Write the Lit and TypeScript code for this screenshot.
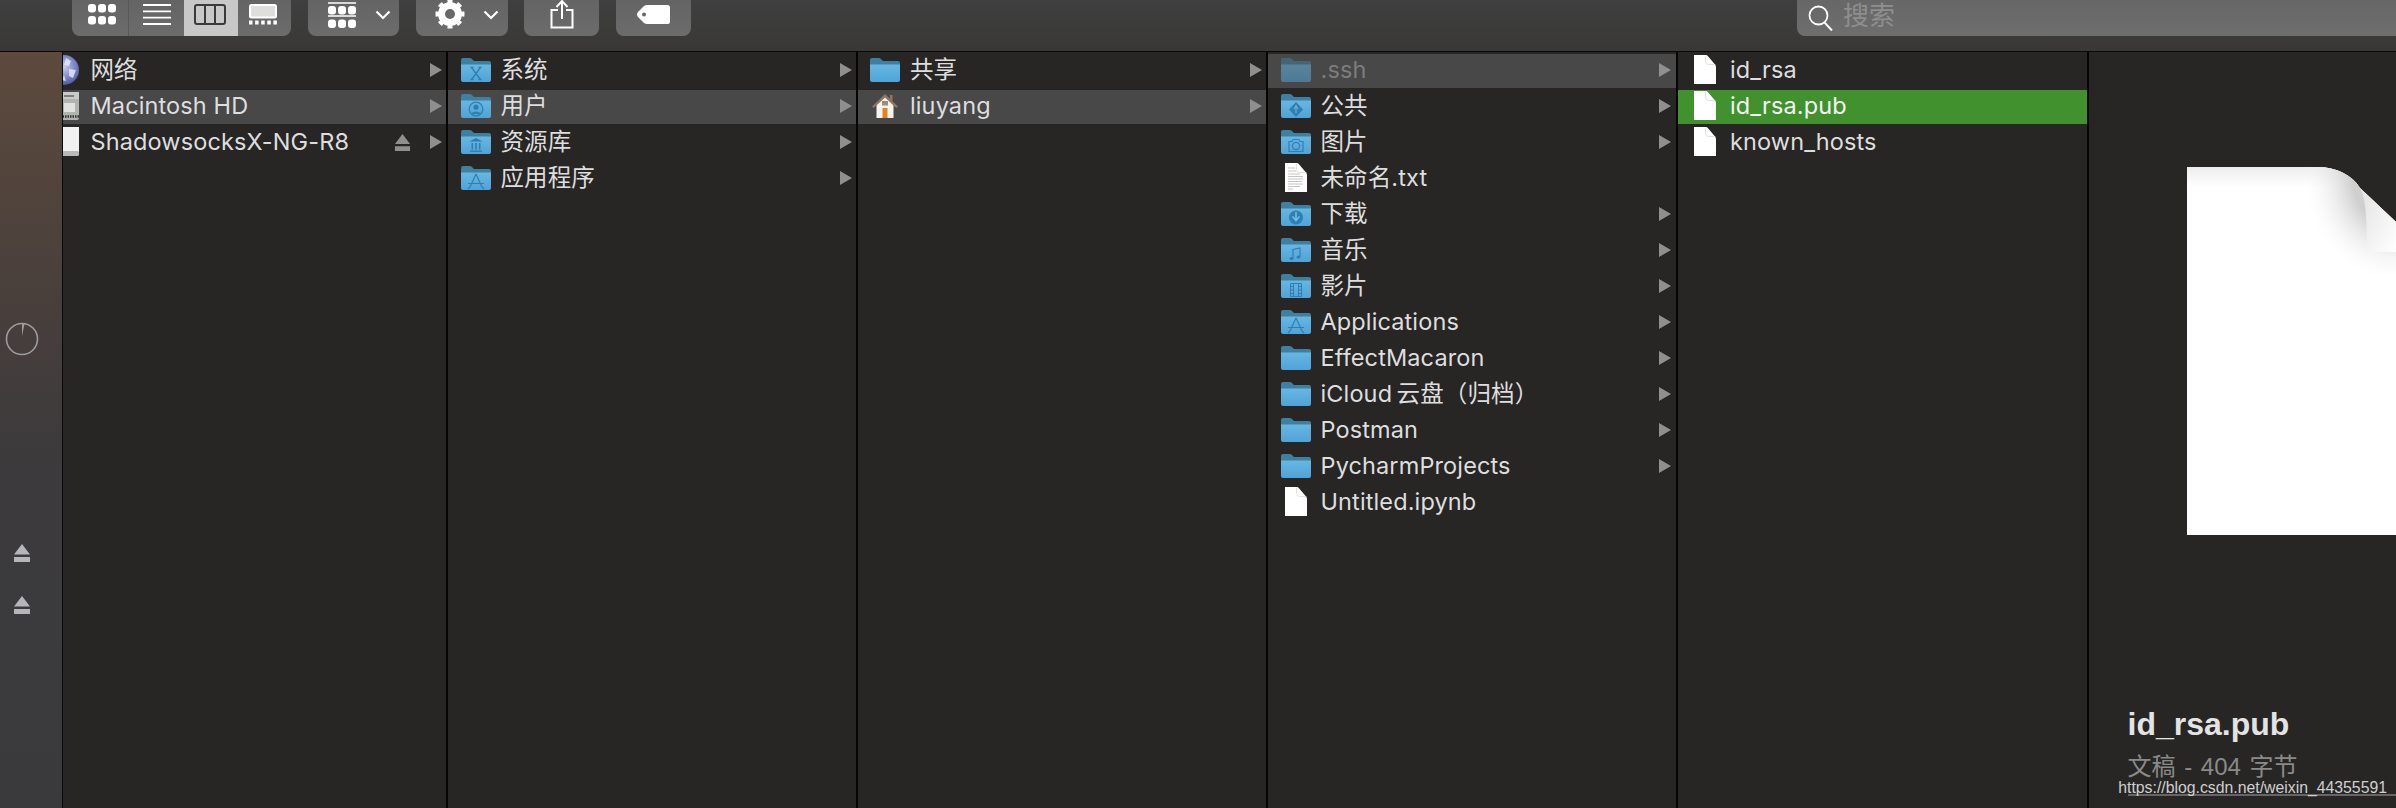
import { LitElement, html, css, svg, nothing } from "lit";
import { customElement } from "lit/decorators.js";

type Row = { n: string; i: string; arrow?: boolean; eject?: boolean; sel?: "grey" | "green"; dim?: boolean };

const blue = "#2f7fb3";
const glyphs: Record<string, unknown> = {
  plain: nothing,
  x: svg`<path d="M10.5 9.5l9 12M19.5 9.5l-9 12M9.5 9.5h3M17.5 9.5h3M9.5 21.5h3M17.5 21.5h3" stroke="${blue}" stroke-width="1.3" fill="none"/>`,
  user: svg`<circle cx="15" cy="15" r="6.8" stroke="${blue}" stroke-width="1.3" fill="none"/><circle cx="15" cy="13.2" r="2.6" fill="${blue}"/><path d="M10.5 20c1-3.2 8-3.2 9 0z" fill="${blue}"/>`,
  bank: svg`<path d="M15 8l7 3.6H8zM9 20.5h12v1.6H9zM10.5 13h1.6v6.5h-1.6zM14.2 13h1.6v6.5h-1.6zM17.9 13h1.6v6.5h-1.6z" fill="${blue}"/>`,
  apps: svg`<path d="M15 8l-6 13M15 8l6 13M7 17.5h16M9 21l-2 2M21 21l2 2" stroke="${blue}" stroke-width="1.2" fill="none"/>`,
  pub: svg`<path d="M15 8l7 7.5-7 7.5-7-7.5z" fill="${blue}"/><path d="M15 11v8M13 15l2-3 2 3" stroke="#6fbde6" stroke-width="1" fill="none"/>`,
  cam: svg`<path d="M8 11.5h3l1.2-2h5.6l1.2 2h3v10H8z" stroke="${blue}" stroke-width="1.2" fill="none"/><circle cx="15" cy="16" r="3.6" stroke="${blue}" stroke-width="1.2" fill="none"/>`,
  down: svg`<circle cx="15" cy="15.5" r="7" fill="${blue}"/><path d="M15 10v8M11.5 14.5l3.5 4 3.5-4" stroke="#6fbde6" stroke-width="1.6" fill="none"/>`,
  music: svg`<path d="M12 20V11.5l7-1.5v8.5" stroke="${blue}" stroke-width="1.2" fill="none"/><ellipse cx="10.5" cy="20.5" rx="2" ry="1.5" fill="${blue}"/><ellipse cx="17.5" cy="19" rx="2" ry="1.5" fill="${blue}"/>`,
  film: svg`<path d="M9.5 9.5h11v13h-11zM12.5 9.5v13M17.5 9.5v13M9.5 12.5h3M9.5 16h3M9.5 19.5h3M17.5 12.5h3M17.5 16h3M17.5 19.5h3" stroke="${blue}" stroke-width="1" fill="none"/>`,
};

const folder = (g: string, dim = false) => html`<svg class="ico ${dim ? "dim" : ""}" viewBox="0 0 30 24" width="30" height="24">
  <defs><linearGradient id="fb" x1="0" y1="0" x2="0" y2="1"><stop offset="0" stop-color="#68b7e2"/><stop offset="1" stop-color="#4fa3d6"/></linearGradient></defs>
  <path d="M0 2q0-2 2-2h7q1.5 0 2.5 1.5L13 3h15q2 0 2 2v4H0z" fill="#3f7f9f"/>
  <path d="M0 6.5h30V22q0 2-2 2H2q-2 0-2-2z" fill="url(#fb)"/>
  ${glyphs[g]}
</svg>`;

const fileIcon = (lines = false) => html`<svg class="ico" viewBox="0 0 30 30" width="30" height="30">
  <path d="M4 0h12q1 0 2 1.2l6.4 7.6q1.600 2 1.600 3V29H4z" fill="#fff"/>
  <path d="M15.500 0.500v6q0 3 3 3h7" fill="none" stroke="#dcdcdc" stroke-width=".8"/>
  ${lines ? svg`<path d="M7 5h7M7 8h8M7 11h12M7 13.500h15M7 16h15M7 18.500h14M7 21h15M7 23.500h12M7 26h5" stroke="#c4c4c4" stroke-width="1" fill="none"/>` : nothing}
</svg>`;

const home = html`<svg class="ico" viewBox="0 0 30 24" width="30" height="24">
  <path d="M6.500 10v14h17V10L15 3z" fill="#f6f4f0"/>
  <path d="M2 12.500L15 0l13 12.500-1.800 1.500L15 3.600 3.800 14z" fill="#8f7560"/>
  <path d="M20 1h2.500v6L20 5z" fill="#8f7560"/>
  <path d="M12.500 14h5v10h-5z" fill="#e8811c"/><rect x="12" y="7" width="6" height="4.500" fill="#a08a76"/>
</svg>`;

const globe = html`<svg class="ico" viewBox="0 0 30 30" width="30" height="30">
  <defs><radialGradient id="gl" cx=".5" cy=".4" r=".6"><stop offset="0" stop-color="#c5cdf0"/><stop offset="1" stop-color="#4e59a6"/></radialGradient></defs>
  <circle cx="15" cy="15" r="15" fill="url(#gl)"/>
  <path d="M17 3l5 3-2 5-5-1zM20 14l7 1-3 8-4-2zM15 20l2 6-4-1z" fill="#e8ecfa" opacity=".8"/>
</svg>`;

const hd = html`<svg class="ico" viewBox="0 0 30 30" width="30" height="30">
  <rect x="1" y="1" width="29" height="28" rx="2" fill="#aeb4ae"/>
  <rect x="1" y="1" width="29" height="7" fill="#c8cbc6"/>
  <rect x="15" y="4" width="10" height="2" fill="#7c807c"/>
  <rect x="15" y="12" width="11" height="9" fill="#dfe2de"/>
  <path d="M1 25.500h29" stroke="#333" stroke-width="2.500" stroke-dasharray="1.500 1"/>
</svg>`;

const usb = html`<svg class="ico" viewBox="0 0 30 30" width="30" height="30">
  <rect x="1" y="0" width="29" height="25" fill="#f1f1f1"/>
  <rect x="1" y="24" width="29" height="5" rx="1.500" fill="#b9b9b9"/>
</svg>`;

const icon = (r: Row) => {
  if (r.i === "file") return fileIcon();
  if (r.i === "txt") return fileIcon(true);
  if (r.i === "home") return home;
  if (r.i === "globe") return globe;
  if (r.i === "hd") return hd;
  if (r.i === "usb") return usb;
  return folder(r.i, r.dim);
};

const eject = (w: number, h: number, c: string) => html`<svg class="eject" viewBox="0 0 16 18" width="${w}" height="${h}">
  <path d="M8 0l8 10.500H0zM0 13h16v5H0z" fill="${c}"/>
</svg>`;

const columns: { cls: string; rows: Row[] }[] = [
  {
    cls: "c1",
    rows: [
      { n: "网络", i: "globe", arrow: true },
      { n: "Macintosh HD", i: "hd", arrow: true, sel: "grey" },
      { n: "ShadowsocksX-NG-R8", i: "usb", arrow: true, eject: true },
    ],
  },
  {
    cls: "c2",
    rows: [
      { n: "系统", i: "x", arrow: true },
      { n: "用户", i: "user", arrow: true, sel: "grey" },
      { n: "资源库", i: "bank", arrow: true },
      { n: "应用程序", i: "apps", arrow: true },
    ],
  },
  {
    cls: "c3",
    rows: [
      { n: "共享", i: "plain", arrow: true },
      { n: "liuyang", i: "home", arrow: true, sel: "grey" },
    ],
  },
  {
    cls: "c4",
    rows: [
      { n: ".ssh", i: "plain", arrow: true, sel: "grey", dim: true },
      { n: "公共", i: "pub", arrow: true },
      { n: "图片", i: "cam", arrow: true },
      { n: "未命名.txt", i: "txt" },
      { n: "下载", i: "down", arrow: true },
      { n: "音乐", i: "music", arrow: true },
      { n: "影片", i: "film", arrow: true },
      { n: "Applications", i: "apps", arrow: true },
      { n: "EffectMacaron", i: "plain", arrow: true },
      { n: "iCloud\u2009云盘（归档）", i: "plain", arrow: true },
      { n: "Postman", i: "plain", arrow: true },
      { n: "PycharmProjects", i: "plain", arrow: true },
      { n: "Untitled.ipynb", i: "file" },
    ],
  },
  {
    cls: "c5",
    rows: [
      { n: "id_rsa", i: "file" },
      { n: "id_rsa.pub", i: "file", sel: "green" },
      { n: "known_hosts", i: "file" },
    ],
  },
];

@customElement("app-root")
export class AppRoot extends LitElement {
  static styles = css`
    :host {
      display: block;
      width: 2396px;
      height: 808px;
      overflow: hidden;
      background: #272625;
      font-family: Inter, "Noto Sans CJK SC", "Liberation Sans", sans-serif;
      position: relative;
    }
    .toolbar {
      height: 51px;
      border-bottom: 1.5px solid #0a0a0a;
      background: linear-gradient(#3f3f3f, #393836);
      display: flex;
      align-items: flex-start;
      padding-left: 72px;
      box-sizing: content-box;
    }
    .seg {
      display: flex;
      height: 36px;
      width: 219px;
      border-radius: 0 0 8px 8px;
      overflow: hidden;
      background: linear-gradient(#646464, #6c6c6c);
      margin-right: 17px;
    }
    .seg div {
      display: flex;
      justify-content: center;
      padding-top: 4px;
      box-sizing: border-box;
    }
    .seg .a { width: 57px; border-right: 1px solid #585858; padding-left: 3px; }
    .seg .b { width: 55px; }
    .seg .s { width: 54px; background: #c8c8c8; padding-right: 2px; }
    .seg .d { width: 53px; padding-right: 4px; }
    .btn {
      height: 36px;
      border-radius: 0 0 8px 8px;
      background: linear-gradient(#646464, #6c6c6c);
      display: flex;
      align-items: flex-start;
      justify-content: center;
      box-sizing: border-box;
      flex: none;
      margin-right: 17px;
    }
    .btn svg { display: block; }
    .b91 { width: 91px; gap: 19px; justify-content: flex-start; padding-left: 20px; }
    .b92 { width: 92px; gap: 18px; justify-content: flex-start; padding-left: 19px; margin-right: 16px; }
    .b75 { width: 75px; }
    .tag { margin-top: 4px; }
    .chev { margin-top: 10px; }
    .search {
      margin-left: auto;
      width: 599px;
      height: 36px;
      border-radius: 0 0 0 8px;
      background: linear-gradient(#676767, #6e6e6e);
      display: flex;
      align-items: center;
      padding-left: 11px;
      box-sizing: border-box;
      gap: 9px;
      color: #8e8e8e;
      font-size: 26px;
      line-height: 30px;
    }
    .search span { margin-top: -4px; }
    .main {
      display: flex;
      height: 756px;
    }
    .side {
      width: 44px;
      padding: 270px 18px 0 0;
      flex: none;
      border-right: 1.5px solid #0a0a0a;
      background: linear-gradient(#5d4a3d 0%, #4a403c 30%, #3c3a3c 55%, #3a3a3c 100%);
      display: flex;
      flex-direction: column;
      align-items: center;
      box-sizing: content-box;
    }
    .side svg { display: block; }
    .side .e1 { margin-top: 188px; }
    .side .e2 { margin-top: 34px; }
    .col {
      flex: none;
      border-right: 2px solid #050505;
      padding-top: 2px;
      box-sizing: content-box;
      display: flex;
      flex-direction: column;
      gap: 2px;
      background: #272625;
    }
    .c1 { width: 382.500px; }
    .c2, .c3 { width: 408px; }
    .c4 { width: 408.500px; }
    .c5 { width: 408.500px; }
    .row {
      height: 34px;
      box-sizing: border-box;
      display: flex;
      align-items: center;
      padding: 0 4px 2px 13px;
      overflow: hidden;
      color: #dedede;
      font-size: 23.500px;
      line-height: 34px;
      flex: none;
    }
    .c3 .row { padding-left: 12.500px; }
    .c5 .row { padding-left: 12px; }
    .c4 .row { padding-right: 5px; }
    .c1 .row { padding-left: 0; }
    .c1 .ico { margin-left: -14px; }
    .c1 .name { margin-left: 11.500px; }
    .grey { background: #484848; }
    .green { background: #41912f; color: #f4f4f4; }
    .ico { flex: none; display: block; }
    .dim { opacity: 0.55; }
    .dimtext { color: #7c7c7c; }
    .name { margin-left: 10px; margin-bottom: 1px; flex: 1; white-space: pre; letter-spacing: 0.120px; }
    .arrow { width: 12px; height: 14px; flex: none; display: block; }
    .eject { flex: none; display: block; margin-right: 19px; }
    .side .eject { margin-right: 0; }
    .preview {
      flex: 1;
      padding-top: 115px;
      overflow: hidden;
      color: #e3e3e3;
    }
    .doc { display: block; margin-left: 98px; }
    .title {
      margin: 171px 0 0 39px;
      font-size: 32px;
      font-weight: 700;
      line-height: 36px;
      font-family: "Liberation Sans", "Noto Sans CJK SC", sans-serif;
    }
    .meta {
      margin: 10px 0 0 39px;
      font-size: 24px;
      line-height: 30px;
      word-spacing: 2px;
      color: #8a8a8a;
      font-family: "Liberation Sans", "Noto Sans CJK SC", sans-serif;
      white-space: pre;
    }
    .wm {
      position: absolute;
      right: 9px;
      bottom: 10px;
      font-size: 15.800px;
      line-height: 20px;
      color: #cfcfcf;
      font-family: "Liberation Sans", sans-serif;
      white-space: nowrap;
    }
    .wmline {
      position: absolute;
      left: 2128px;
      right: 0;
      bottom: 12px;
      height: 2px;
      background: #666;
    }
  `;

  private row(r: Row) {
    return html`<div class="row ${r.sel ?? ""}">
      ${icon(r)}
      <span class="name ${r.dim ? "dimtext" : ""}">${r.n}</span>
      ${r.eject ? eject(17, 17, "#8f8f8f") : nothing}
      ${r.arrow ? html`<svg class="arrow" viewBox="0 0 12 14"><path d="M0 0l12 7-12 7z" fill="#8f8f8f"/></svg>` : nothing}
    </div>`;
  }

  render() {
    const dot = (x: number, y: number) => svg`<rect x="${x}" y="${y}" width="8" height="8.500" rx="3" fill="#fff"/>`;
    const chev = html`<svg class="chev" width="16" height="10" viewBox="0 0 16 10"><path d="M1.500 1.500L8 8l6.500-6.500" stroke="#fff" stroke-width="2.200" fill="none"/></svg>`;
    return html`
      <div class="toolbar">
        <div class="seg">
          <div class="a"><svg width="28" height="21" viewBox="0 0 28 21">
            ${dot(0, 0)}${dot(10, 0)}${dot(20, 0)}${dot(0, 12)}${dot(10, 12)}${dot(20, 12)}
          </svg></div>
          <div class="b"><svg width="28" height="21" viewBox="0 0 28 21">
            <path d="M0 1h28M0 7.300h28M0 13.600h28M0 20h28" stroke="#fff" stroke-width="1.800"/>
          </svg></div>
          <div class="s"><svg width="32" height="21" viewBox="0 0 32 21">
            <rect x="1" y="1" width="30" height="19" rx="2" fill="none" stroke="#3a3a3a" stroke-width="2"/>
            <path d="M11 1v19M21 1v19" stroke="#3a3a3a" stroke-width="2"/>
          </svg></div>
          <div class="d"><svg width="28" height="21" viewBox="0 0 28 21">
            <rect x="1" y="1" width="26" height="12.500" rx="1.500" fill="#dededc" stroke="#fff" stroke-width="2"/>
            <path d="M0 18.500h28" stroke="#fff" stroke-width="4" stroke-dasharray="3.500 2.600"/>
          </svg></div>
        </div>
        <div class="btn b91">
          <svg width="28" height="29" viewBox="0 0 28 29">
            <path d="M0 3h28M0 16h28" stroke="#fff" stroke-width="1.600"/>
            ${dot(0, 6)}${dot(10, 6)}${dot(20, 6)}${dot(0, 19.500)}${dot(10, 19.500)}${dot(20, 19.500)}
          </svg>
          ${chev}
        </div>
        <div class="btn b92">
          <svg width="30" height="29" viewBox="0 0 30 29">
            <circle cx="15" cy="14" r="8.500" fill="none" stroke="#fff" stroke-width="7"/>
            <circle cx="15" cy="14" r="12.500" fill="none" stroke="#fff" stroke-width="4" pathLength="8" stroke-dasharray="0.500 0.500" stroke-dashoffset="0.250"/>
          </svg>
          ${chev}
        </div>
        <div class="btn b75">
          <svg width="24" height="29" viewBox="0 0 24 29">
            <path d="M8 10H1.500v17.500h21V10H16" fill="none" stroke="#fff" stroke-width="2"/>
            <path d="M12 19V1.500M6.500 7L12 1l5.500 6" fill="none" stroke="#fff" stroke-width="2"/>
          </svg>
        </div>
        <div class="btn b75">
          <svg class="tag" width="35" height="21" viewBox="0 0 35 21">
            <path d="M11 1h20.500q2.500 0 2.500 2.500v14q0 2.500-2.500 2.500H11q-1.500 0-3-1L2 13q-2-2.500 0-5l6-6q1.500-1 3-1z" fill="#fff"/>
            <circle cx="8" cy="10.500" r="2" fill="#666"/>
          </svg>
        </div>
        <div class="search">
          <svg width="26" height="26" viewBox="0 0 26 26">
            <circle cx="10.500" cy="10.500" r="9" fill="none" stroke="#fff" stroke-width="1.800"/>
            <path d="M16.500 17.500L24 25.500" stroke="#fff" stroke-width="2"/>
          </svg>
          <span>搜索</span>
        </div>
      </div>
      <div class="main">
        <div class="side">
          <svg width="34" height="34" viewBox="0 0 34 34">
            <circle cx="17" cy="17" r="15.500" fill="none" stroke="#9d9d9f" stroke-width="1.600"/>
            <path d="M17 2l2.500 0-2.500 12z" fill="#9d9d9f"/>
          </svg>
          <svg class="eject e1" viewBox="0 0 16 18" width="16" height="18"><path d="M8 0l8 10.500H0zM0 13h16v5H0z" fill="#b6b6ba"/></svg>
          <svg class="eject e2" viewBox="0 0 16 18" width="16" height="18"><path d="M8 0l8 10.500H0zM0 13h16v5H0z" fill="#b6b6ba"/></svg>
        </div>
        ${columns.map((c) => html`<div class="col ${c.cls}">${c.rows.map((r) => this.row(r))}</div>`)}
        <div class="preview">
          <svg class="doc" width="209" height="368" viewBox="0 0 209 368">
            <defs>
              <linearGradient id="pg" x1="0" y1="0" x2="0" y2="1"><stop offset="0" stop-color="#ededed"/><stop offset=".18" stop-color="#fff"/></linearGradient>
              <linearGradient id="fl" x1="0" y1="0" x2="1" y2="1"><stop offset="0" stop-color="#e2e2e2"/><stop offset="1" stop-color="#fff"/></linearGradient>
              <radialGradient id="sh" cx="1" cy=".1" r=".8"><stop offset=".45" stop-color="#bbb" stop-opacity=".7"/><stop offset="1" stop-color="#fff" stop-opacity="0"/></radialGradient>
            </defs>
            <path d="M0 0H130C150 0 165 8 173 21L209 55V368H0Z" fill="#fff"/>
            <path d="M0 0H130C150 0 165 8 173 21L209 55V110H0Z" fill="url(#pg)"/>
            <path d="M90 0H130C150 0 165 8 173 21L209 55V130H90Z" fill="url(#sh)"/>
            <path d="M173 21C178 30 180 45 180 85H209V55Z" fill="url(#fl)"/>
          </svg>
          <div class="title">id_rsa.pub</div>
          <div class="meta">文稿 - 404 字节</div>
        </div>
      </div>
      <div class="wmline"></div>
      <div class="wm">https://blog.csdn.net/weixin_44355591</div>
    `;
  }
}
